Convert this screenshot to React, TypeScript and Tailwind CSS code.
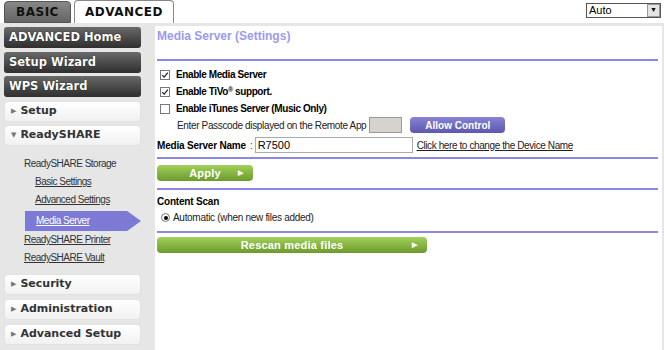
import React from 'react';

const SANS = "font-['Liberation_Sans',Arial,sans-serif]";
const WIDE = "font-['DejaVu_Sans',Verdana,sans-serif]";

const DarkButton: React.FC<{ label: string }> = ({ label }) => (
  <div
    className={`${WIDE} h-[21px] w-[137px] rounded-[3px] bg-gradient-to-b from-[#6a6a6a] to-[#2f2f2f] pl-[5px] text-[11.5px] font-bold leading-[21px] text-white [text-shadow:0_0_1px_#000]`}
  >
    {label}
  </div>
);

const LightButton: React.FC<{ label: string; open?: boolean }> = ({ label, open }) => (
  <div
    className={`${WIDE} flex h-[21px] w-[137px] items-center gap-[4px] rounded-[4px] border border-[#e2e2e2] bg-gradient-to-b from-white to-[#f1f1f1] pl-[6px] text-[11px] font-bold text-[#333]`}
  >
    <span className="text-[7px] text-[#777]">{open ? '▼' : '▶'}</span>
    {label}
  </div>
);

const Check: React.FC<{ checked?: boolean }> = ({ checked }) => (
  <span className="flex h-[10px] w-[10px] items-center justify-center border border-[#777] bg-white">
    {checked && (
      <svg viewBox="0 0 10 10" className="h-[9px] w-[9px]">
        <path d="M1.5 4.5 L4 7 L8.5 1.5" stroke="#222" strokeWidth="1.6" fill="none" />
      </svg>
    )}
  </span>
);

const Rule = () => <div className="h-[2px] w-full bg-[#8a87e6]" />;

const GreenButton: React.FC<{ label: string; w: string }> = ({ label, w }) => (
  <div
    className={`${SANS} relative flex h-[16px] ${w} items-center justify-center rounded-[4px] bg-gradient-to-b from-[#a2d15a] to-[#6d9a2c] text-[11px] font-bold tracking-[0.2px] text-white`}
  >
    {label}
    <span className="absolute right-[10px] top-[3px] text-[7px]">▶</span>
  </div>
);

export default function App() {
  return (
    <div className={`${SANS} h-[350px] w-[664px] overflow-hidden bg-[#e6e6e6]`}>
      {/* top tabs */}
      <div className="flex h-[23px] items-end bg-white pl-[4px]">
        <div
          className={`${WIDE} mr-[3px] h-[22px] w-[67px] rounded-t-[4px] border border-[#555] bg-gradient-to-b from-[#888] to-[#666] text-center text-[12px] font-bold leading-[21px] tracking-[0.5px] text-[#111]`}
        >
          BASIC
        </div>
        <div
          className={`${WIDE} h-[23px] w-[100px] rounded-t-[4px] border border-b-0 border-[#888] bg-white text-center text-[12px] font-bold leading-[22px] tracking-[0.5px] text-[#111]`}
        >
          ADVANCED
        </div>
        <div className="ml-auto mr-[3px] self-start pt-[3px]">
          <div className="flex h-[15px] w-[75px] items-center border border-[#555] bg-white">
            <span className="flex-1 pl-[2px] text-[11px] leading-none text-black">Auto</span>
            <span className="flex h-[13px] w-[13px] items-center justify-center border border-[#999] bg-[#e4e4e4] text-[7px] text-black">
              ▼
            </span>
          </div>
        </div>
      </div>

      <div className="flex h-[327px]">
        {/* sidebar */}
        <div className="flex w-[155px] flex-col pl-[4px] pt-[4px]">
          <div className="flex flex-col gap-[3.5px]">
            <DarkButton label="ADVANCED Home" />
            <DarkButton label="Setup Wizard" />
            <DarkButton label="WPS Wizard" />
            <LightButton label="Setup" />
            <LightButton label="ReadySHARE" open />
          </div>
          <div className="flex flex-col pt-[9px] text-[10px] tracking-[-0.5px] text-[#333]">
            <div className="h-[18px] pl-[20px] leading-[18px]">ReadySHARE Storage</div>
            <div className="h-[18px] pl-[31px] leading-[18px] underline">Basic Settings</div>
            <div className="h-[18px] pl-[31px] leading-[18px] underline">Advanced Settings</div>
            <div className="ml-[21px] mt-[2px] h-[20px] w-[116px] bg-[#7d7ad6] pl-[11px] leading-[20px] text-white underline [clip-path:polygon(0_0,88%_0,100%_50%,88%_100%,0_100%)]">
              Media Server
            </div>
            <div className="h-[18px] pl-[20px] leading-[18px] underline">ReadySHARE Printer</div>
            <div className="h-[18px] pl-[20px] leading-[18px] underline">ReadySHARE Vault</div>
          </div>
          <div className="flex flex-col gap-[4px] pt-[7px]">
            <LightButton label="Security" />
            <LightButton label="Administration" />
            <LightButton label="Advanced Setup" />
          </div>
        </div>

        {/* content */}
        <div className="mr-[2px] mt-[3px] flex-1 bg-white pl-[2px] pr-[4px]">
          <div className="pt-[1px] text-[12px] font-bold text-[#9c99f2]">Media Server (Settings)</div>
          <div className="mt-[14px]">
            <Rule />
          </div>
          <div className="flex flex-col gap-[5px] pl-[3px] pt-[8px] text-[10px] font-bold leading-[12px] tracking-[-0.4px] text-black">
            <label className="flex items-center gap-[6px]">
              <Check checked />
              Enable Media Server
            </label>
            <label className="flex items-center gap-[6px]">
              <Check checked />
              <span>
                Enable TiVo<sup className="text-[7px]">®</sup> support.
              </span>
            </label>
            <label className="flex items-center gap-[6px]">
              <Check />
              Enable iTunes Server (Music Only)
            </label>
          </div>
          <div className="flex items-center pl-[20px] pt-[2px] text-[10px] text-[#222]">
            <span className="tracking-[-0.35px]">Enter Passcode displayed on the Remote App</span>
            <span className="ml-[3px] h-[16px] w-[33px] border border-[#999] bg-[#d6d3cd]" />
            <span className="ml-[8px] flex h-[16px] w-[95px] items-center justify-center rounded-[4px] bg-gradient-to-b from-[#8883d6] to-[#5d57ad] text-[10px] font-bold text-white">
              Allow Control
            </span>
          </div>
          <div className="flex items-center pt-[4px] text-[10px]">
            <span className="font-bold tracking-[-0.2px] text-black">Media Server Name</span>
            <span className="ml-[4px] text-[#444]">:</span>
            <span className="ml-[2px] flex h-[16px] w-[158px] items-center border border-[#aaa] pl-[2px] text-[11px] text-black">
              R7500
            </span>
            <span className="ml-[4px] tracking-[-0.4px] text-[#222] underline">
              Click here to change the Device Name
            </span>
          </div>
          <div className="mt-[4px]">
            <Rule />
          </div>
          <div className="pt-[6px]">
            <GreenButton label="Apply" w="w-[96px]" />
          </div>
          <div className="mt-[7px]">
            <Rule />
          </div>
          <div className="pt-[4px] text-[10px] font-bold tracking-[-0.2px] text-black">Content Scan</div>
          <div className="flex items-center gap-[3px] pl-[4px] pt-[1px] text-[10px] tracking-[-0.3px] text-[#222]">
            <span className="flex h-[9px] w-[9px] items-center justify-center rounded-full border border-[#777] bg-white">
              <span className="h-[4px] w-[4px] rounded-full bg-black" />
            </span>
            Automatic (when new files added)
          </div>
          <div className="mt-[6px]">
            <Rule />
          </div>
          <div className="pt-[4px]">
            <GreenButton label="Rescan media files" w="w-[270px]" />
          </div>
        </div>
      </div>
    </div>
  );
}
